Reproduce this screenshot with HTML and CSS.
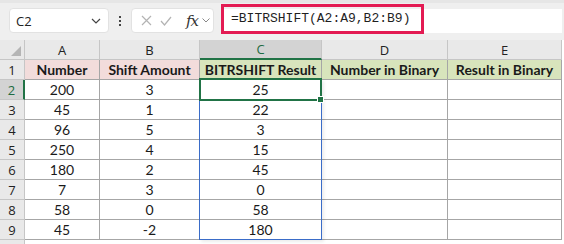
FILE: index.html
```html
<!DOCTYPE html>
<html lang="en">
  <head>
    <meta charset="UTF-8" />
    <meta name="viewport" content="width=device-width, initial-scale=1.0" />
    <title>BITRSHIFT</title>
    <link rel="stylesheet" href="styles.css">
  </head>
  <body>
    <div class="toolbar">
      <div class="name-box">
        <span>C2</span>
        <svg class="chev" width="10" height="6" viewBox="0 0 10 6"><path d="M1 1l4 4 4-4" fill="none" stroke="#444" stroke-width="1.2"/></svg>
      </div>
      <div class="dots"><span></span><span></span><span></span></div>
      <div class="fx-box">
        <svg width="11" height="11" viewBox="0 0 11 11"><path d="M1 1l9 9M10 1l-9 9" stroke="#b3b3b3" stroke-width="1.2"/></svg>
        <svg width="12" height="10" viewBox="0 0 12 10"><path d="M1 5l3.5 4L11 1" fill="none" stroke="#b3b3b3" stroke-width="1.2"/></svg>
        <span class="fx">fx</span>
        <svg width="8" height="5" viewBox="0 0 8 5"><path d="M0.5 0.5l3.5 3.5 3.5-3.5" fill="none" stroke="#888" stroke-width="1"/></svg>
      </div>
      <div class="formula">
        <span class="formula-text">=BITRSHIFT(A2:A9,B2:B9)</span>
      </div>
    </div>

    <div class="sheet">
      <div class="corner"><span class="tri"></span></div>
      <div class="col-head">A</div>
      <div class="col-head">B</div>
      <div class="col-head active">C</div>
      <div class="col-head">D</div>
      <div class="col-head">E</div>

      <div class="row-head">1</div>
      <div class="cell th pink">Number</div>
      <div class="cell th pink">Shift Amount</div>
      <div class="cell th green">BITRSHIFT Result</div>
      <div class="cell th green">Number in Binary</div>
      <div class="cell th green">Result in Binary</div>

      <div class="row-head active">2</div>
      <div class="cell">200</div><div class="cell">3</div><div class="cell c">25</div><div class="cell"></div><div class="cell"></div>
      <div class="row-head">3</div>
      <div class="cell">45</div><div class="cell">1</div><div class="cell c">22</div><div class="cell"></div><div class="cell"></div>
      <div class="row-head">4</div>
      <div class="cell">96</div><div class="cell">5</div><div class="cell c">3</div><div class="cell"></div><div class="cell"></div>
      <div class="row-head">5</div>
      <div class="cell">250</div><div class="cell">4</div><div class="cell c">15</div><div class="cell"></div><div class="cell"></div>
      <div class="row-head">6</div>
      <div class="cell">180</div><div class="cell">2</div><div class="cell c">45</div><div class="cell"></div><div class="cell"></div>
      <div class="row-head">7</div>
      <div class="cell">7</div><div class="cell">3</div><div class="cell c">0</div><div class="cell"></div><div class="cell"></div>
      <div class="row-head">8</div>
      <div class="cell">58</div><div class="cell">0</div><div class="cell c">58</div><div class="cell"></div><div class="cell"></div>
      <div class="row-head">9</div>
      <div class="cell">45</div><div class="cell">-2</div><div class="cell c">180</div><div class="cell"></div><div class="cell"></div>

      <div class="row-head last"></div>
      <div class="blank"></div>

      <div class="range"></div>
      <div class="selected"></div>
    </div>
  </body>
</html>
```

FILE: styles.css
```css
body {
  margin: 0;
  padding: 0;
  width: 564px;
  height: 244px;
  overflow: hidden;
  background: #ffffff;
  font-family: "Open Sans", "Noto Sans", sans-serif;
}

.toolbar {
  height: 40px;
  box-sizing: border-box;
  background: #efefef;
  border-top: 3px solid #e6e6e6;
  display: flex;
  align-items: flex-start;
  position: relative;
}

.name-box {
  margin: 5px 0 0 9px;
  width: 100px;
  height: 25px;
  box-sizing: border-box;
  background: white;
  border: 1px solid #e2e2e2;
  border-radius: 4px;
  display: flex;
  align-items: center;
  justify-content: space-between;
  padding: 0 7px 0 6px;
  font-size: 13px;
  color: #222;
}

.dots {
  width: 22px;
  height: 30px;
  display: flex;
  flex-direction: column;
  align-items: center;
  justify-content: center;
  gap: 2px;
  margin-top: 3px;
}

.dots span {
  width: 2px;
  height: 2px;
  background: #444;
}

.fx-box {
  margin-top: 5px;
  width: 83px;
  height: 25px;
  box-sizing: border-box;
  background: white;
  border: 1px solid #e2e2e2;
  border-radius: 4px;
  display: flex;
  align-items: center;
  padding-left: 9px;
  gap: 8px;
}

.fx {
  font-family: "DejaVu Serif", "Liberation Serif", serif;
  font-style: italic;
  font-size: 15px;
  color: #333;
  margin-left: 6px;
  margin-right: -4px;
  letter-spacing: -1px;
}

.formula {
  margin: 6px 0 0 7px;
  height: 24px;
  flex: 1;
  margin-right: 2px;
  background: white;
  position: relative;
}

.formula-text {
  position: absolute;
  left: 0;
  top: -5px;
  width: 203px;
  height: 30px;
  box-sizing: border-box;
  border: 3px solid #e31b53;
  padding-left: 7px;
  line-height: 24px;
  font-family: "Liberation Mono", "DejaVu Sans Mono", monospace;
  font-size: 13px;
  color: #1f1f1f;
}

.sheet {
  display: grid;
  grid-template-columns: 25px 75px 100px 122px 126px 114px;
  grid-template-rows: repeat(10, 20px) 4px;
  position: relative;
  font-family: "Lato", "Open Sans", sans-serif;
  font-size: 14px;
  color: #1a1a1a;
}

.corner {
  background: #e9e9e9;
  border-right: 1px solid #c6c6c6;
  border-bottom: 1px solid #c6c6c6;
  position: relative;
}

.tri {
  position: absolute;
  right: 3px;
  bottom: 3px;
  width: 0;
  height: 0;
  border-left: 10px solid transparent;
  border-bottom: 10px solid #b5b5b5;
}

.col-head {
  background: #e9e9e9;
  border-right: 1px solid #c6c6c6;
  border-bottom: 1px solid #c6c6c6;
  display: flex;
  align-items: center;
  justify-content: center;
  font-family: "Open Sans", "Noto Sans", sans-serif;
  font-size: 13px;
  color: #222;
}

.col-head.active {
  background: #d3d3d3;
  border-bottom: 2px solid #217346;
  color: #1e6b42;
}

.row-head {
  background: #e9e9e9;
  border-right: 1px solid #c6c6c6;
  border-bottom: 1px solid #c6c6c6;
  display: flex;
  align-items: center;
  justify-content: center;
  font-family: "Open Sans", "Noto Sans", sans-serif;
  font-size: 13px;
  color: #222;
}

.row-head.active {
  background: #d3d3d3;
  border-right: 2px solid #217346;
  color: #1e6b42;
}

.row-head.last {
  border-bottom: none;
}

.cell {
  box-sizing: border-box;
  border-right: 1px solid #a6a6a6;
  border-bottom: 1px solid #a6a6a6;
  display: flex;
  align-items: center;
  justify-content: center;
  white-space: nowrap;
  overflow: hidden;
}

.th {
  font-weight: bold;
}

.pink {
  background: #f2dcdb;
}

.green {
  background: #d8e4bc;
}

.blank {
  grid-column: 2 / 7;
}

/* overlays sit on the grid area without taking part in auto placement */
.range {
  position: absolute;
  grid-column: 4 / 5;
  grid-row: 3 / 11;
  top: -1px;
  left: -1px;
  right: 0;
  bottom: 0;
  border: 1px solid #3a6cc8;
  box-shadow: 2px 2px 3px rgba(0, 0, 0, 0.08);
}

.selected {
  position: absolute;
  grid-column: 4 / 5;
  grid-row: 3 / 4;
  top: -2px;
  left: -1px;
  right: 0;
  bottom: -1px;
  border: 2px solid #217346;
}

.selected::after {
  content: "";
  position: absolute;
  right: -4px;
  bottom: -4px;
  width: 5px;
  height: 5px;
  background: #217346;
  border: 1px solid white;
}
```
